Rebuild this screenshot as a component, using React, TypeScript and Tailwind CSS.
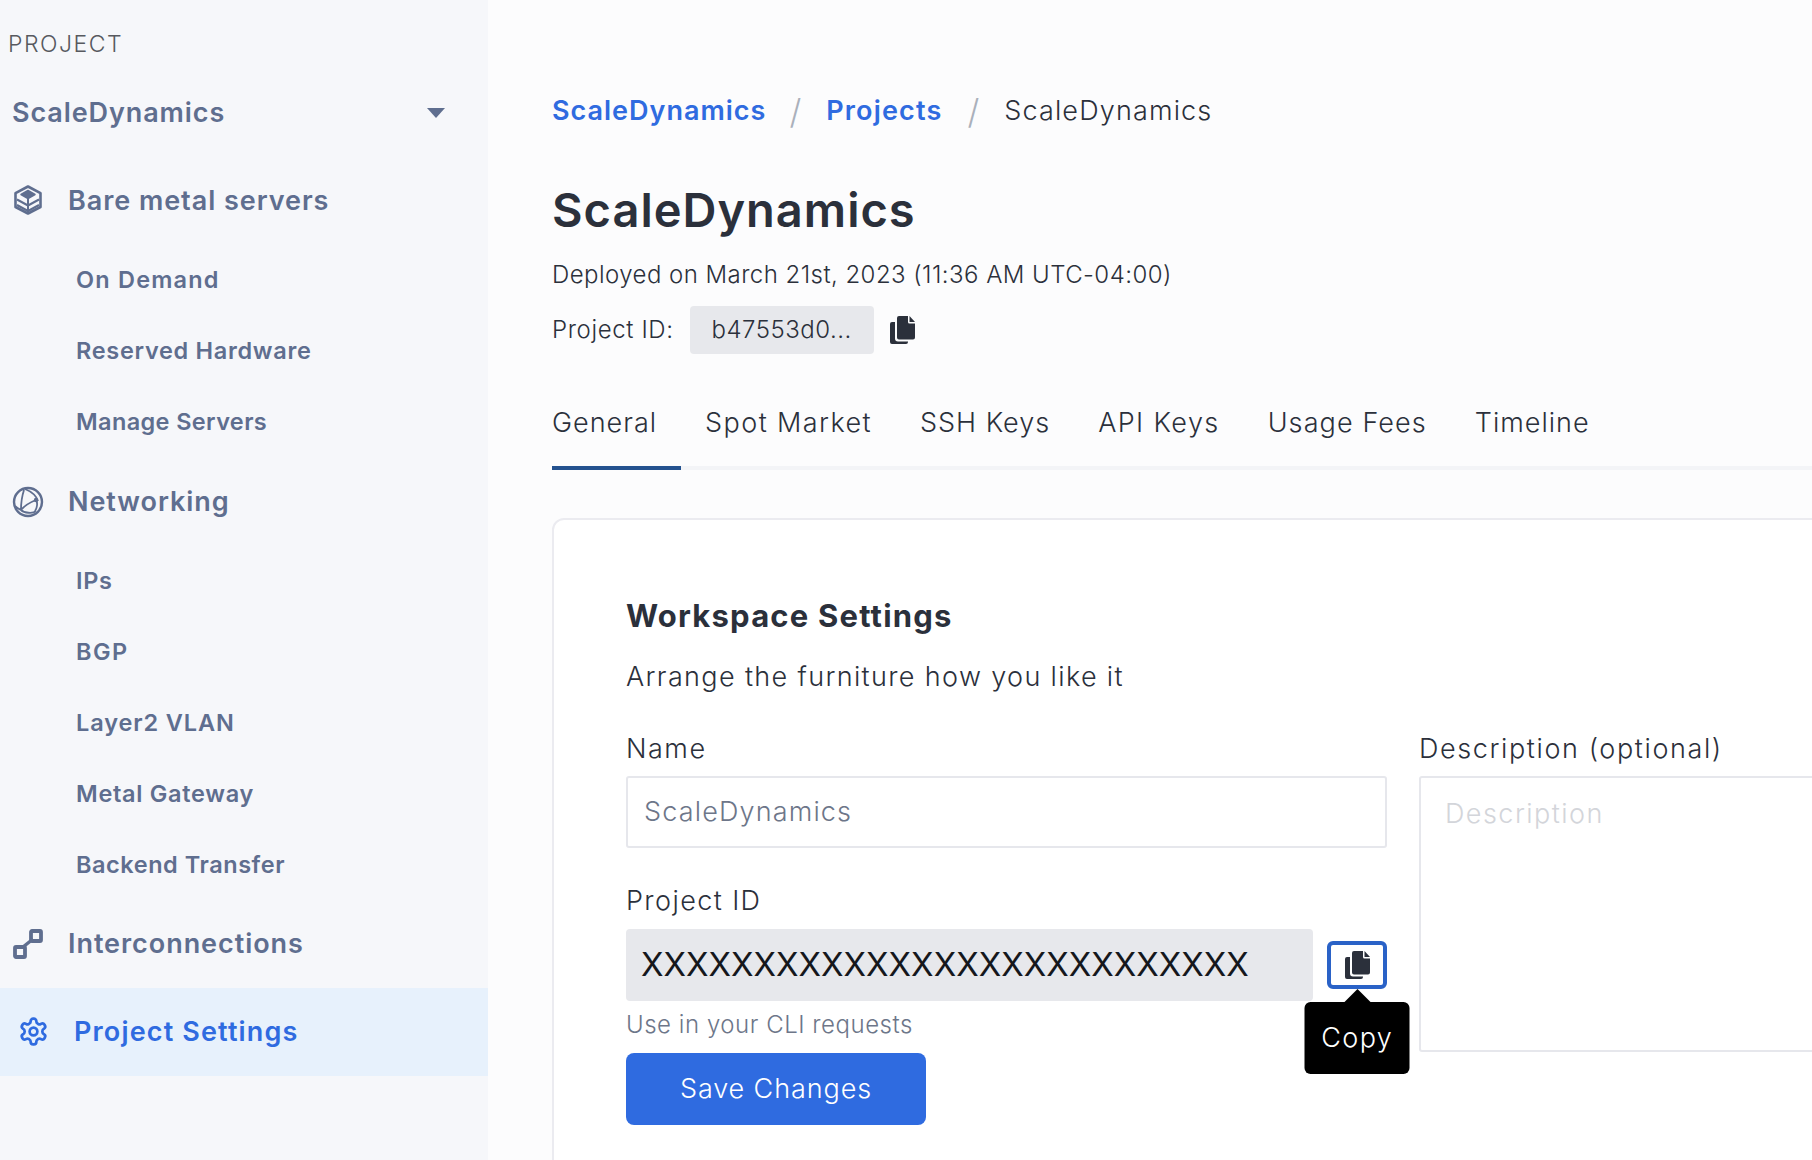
import React from "react";

const F = { fontFamily: "Inter, 'Noto Sans', sans-serif" };

function CopyIcon({ className }: { className: string }) {
  return (
    <svg viewBox="0 0 25 28" className={className} fill="#2b303b">
      <path d="M9 0h9v6a1.500 1.500 0 0 0 1.500 1.500H25v14a2 2 0 0 1-2 2H9a2 2 0 0 1-2-2V2a2 2 0 0 1 2-2z" />
      <path d="M19.500 0 25 6h-5.500z" />
      <path d="M5 6H2a2 2 0 0 0-2 2v18a2 2 0 0 0 2 2h14a2 2 0 0 0 2-2v-.500H8a3 3 0 0 1-3-3z" />
    </svg>
  );
}

function CubeIcon() {
  return (
    <svg viewBox="0 0 28 30" className="w-[28px] h-[30px]" fill="none" stroke="#5f6e8f" strokeWidth="2.600" strokeLinejoin="round">
      <path d="M14 1.500 26.500 8.200V22L14 28.500 1.500 22V8.200z" />
      <path d="M14 5.500 21 9.500 14 13.500 7 9.500z" fill="#5f6e8f" strokeWidth="1.500" />
      <path d="M3 14.500l11 6 11-6M3 20l11 6 11-6M14 14v14" strokeWidth="2" />
    </svg>
  );
}

function GlobeIcon() {
  return (
    <svg viewBox="0 0 32 32" className="w-[32px] h-[32px]" fill="none" stroke="#5f6e8f" strokeWidth="2">
      <circle cx="16" cy="16" r="14" strokeWidth="2.400" />
      <path d="M13 3c5 2 11 6 13 12M24 14c-5 2-11 5-15 10M12 4c-2 6-3 14-3 20 3 3 12 4 15 1M24 14c2 3 1 8-1 11M3 20c2 2 4 3 6 4" strokeWidth="1.800" />
      <circle cx="24" cy="14" r="2.200" fill="#5f6e8f" stroke="none" />
    </svg>
  );
}

function LinkIcon() {
  return (
    <svg viewBox="0 0 30 30" className="w-[30px] h-[30px]" fill="none" stroke="#5f6e8f" strokeWidth="3.800" strokeLinejoin="round">
      <rect x="2" y="18" width="10" height="10" rx="1" />
      <rect x="18" y="2" width="10" height="10" rx="1" />
      <path d="M10 18 20 10" strokeWidth="3.400" />
    </svg>
  );
}

function GearIcon() {
  return (
    <svg viewBox="0 0 24 24" className="w-[31px] h-[31px]" fill="none" stroke="#2f6be0" strokeWidth="2.100" strokeLinecap="round" strokeLinejoin="round">
      <path d="M12.220 2h-.440a2 2 0 0 0-2 2v.180a2 2 0 0 1-1 1.730l-.430.250a2 2 0 0 1-2 0l-.150-.080a2 2 0 0 0-2.730.730l-.220.380a2 2 0 0 0 .730 2.730l.150.100a2 2 0 0 1 1 1.720v.510a2 2 0 0 1-1 1.740l-.150.090a2 2 0 0 0-.730 2.730l.220.380a2 2 0 0 0 2.730.730l.150-.080a2 2 0 0 1 2 0l.430.250a2 2 0 0 1 1 1.730V20a2 2 0 0 0 2 2h.440a2 2 0 0 0 2-2v-.180a2 2 0 0 1 1-1.730l.430-.250a2 2 0 0 1 2 0l.150.080a2 2 0 0 0 2.730-.730l.220-.390a2 2 0 0 0-.730-2.730l-.150-.080a2 2 0 0 1-1-1.740v-.500a2 2 0 0 1 1-1.740l.150-.090a2 2 0 0 0 .730-2.730l-.220-.380a2 2 0 0 0-2.730-.730l-.150.080a2 2 0 0 1-2 0l-.430-.250a2 2 0 0 1-1-1.730V4a2 2 0 0 0-2-2z" />
      <circle cx="12" cy="12" r="3" />
    </svg>
  );
}

function Section({ icon, label }: { icon: React.ReactNode; label: string }) {
  return (
    <div className="flex items-center h-[40px] pl-[12px]">
      <div className="w-[32px] flex justify-center">{icon}</div>
      <span className="ml-[24px] pt-[2px] text-[27px] font-semibold text-[#5f6e8f] tracking-[0.950px]">{label}</span>
    </div>
  );
}

function Sub({ label, track }: { label: string; track: string }) {
  return (
    <div className={"h-[71.200px] flex items-center pl-[76px] text-[23.500px] font-semibold text-[#5f6e8f] " + track}>{label}</div>
  );
}

export default function App() {
  const tabs = [
    { t: "General", c: "tracking-[1px]" },
    { t: "Spot Market", c: "tracking-[1.400px]" },
    { t: "SSH Keys", c: "tracking-[1px]" },
    { t: "API Keys", c: "tracking-[1.400px]" },
    { t: "Usage Fees", c: "tracking-[1.100px]" },
    { t: "Timeline", c: "tracking-[1px]" },
  ];
  return (
    <div style={F} className="flex w-[1812px] h-[1160px] overflow-hidden bg-[#fcfcfd]">
      <aside className="w-[488px] shrink-0 bg-[#f6f7fa]">
        <div className="pt-[28px] pl-[8px] text-[23px] leading-[32px] font-light text-[#57595f] tracking-[1.500px]">PROJECT</div>
        <div className="mt-[33px] flex items-center justify-between h-[40px] pl-[12px] pr-[43px]">
          <span className="text-[27px] font-semibold text-[#5f6e8f] tracking-[0.900px]">ScaleDynamics</span>
          <span className="w-0 h-0 border-l-[9px] border-r-[9px] border-t-[10px] border-l-transparent border-r-transparent border-t-[#5f6e8f]" />
        </div>
        <div className="mt-[47px]"><Section icon={<CubeIcon />} label="Bare metal servers" /></div>
        <div className="mt-[24px]">
          <Sub label="On Demand" track="tracking-[1.200px]" />
          <Sub label="Reserved Hardware" track="tracking-[0.700px]" />
          <Sub label="Manage Servers" track="tracking-[0.370px]" />
        </div>
        <div className="mt-[24px]"><Section icon={<GlobeIcon />} label="Networking" /></div>
        <div className="mt-[23px]">
          <Sub label="IPs" track="tracking-[0.700px]" />
          <Sub label="BGP" track="tracking-[1.400px]" />
          <Sub label="Layer2 VLAN" track="tracking-[0.900px]" />
          <Sub label="Metal Gateway" track="tracking-[0.700px]" />
          <Sub label="Backend Transfer" track="tracking-[0.550px]" />
        </div>
        <div className="mt-[23px]"><Section icon={<LinkIcon />} label="Interconnections" /></div>
        <div className="mt-[24px] h-[88px] bg-[#e7f1fc] flex items-center pl-[18px]">
          <GearIcon />
          <span className="ml-[25px] pt-[2px] text-[27px] font-semibold text-[#2f6be0] tracking-[1.150px]">Project Settings</span>
        </div>
      </aside>

      <main className="flex-1 min-w-0 pl-[64px] pt-[91px]">
        <div className="flex items-center h-[40px] text-[27px] tracking-[1px]">
          <span className="font-semibold text-[#2f6be0]">ScaleDynamics</span>
          <span className="ml-[23px] font-light text-[#aab0bb] text-[34px]">/</span>
          <span className="ml-[24px] font-semibold text-[#2f6be0] tracking-[1.150px]">Projects</span>
          <span className="ml-[25px] font-light text-[#aab0bb] text-[34px]">/</span>
          <span className="ml-[24px] font-light text-[#2b303b] tracking-[1.150px]">ScaleDynamics</span>
        </div>
        <h1 className="mt-[50px] text-[47px] leading-[58px] font-semibold text-[#2b303b] tracking-[1px]">ScaleDynamics</h1>
        <p className="mt-[20px] text-[24px] leading-[32px] font-light text-[#2b303b] tracking-[0.450px]">Deployed on March 21st, 2023 (11:36 AM UTC-04:00)</p>
        <div className="mt-[15px] flex items-center h-[48px]">
          <span className="text-[24px] font-light text-[#2b303b] tracking-[0.630px]">Project ID:</span>
          <span className="ml-[16px] w-[184px] h-[48px] rounded-[4px] bg-[#e7e8ec] flex items-center justify-center text-[24px] font-light text-[#2b303b] tracking-[0.500px]">b47553d0...</span>
          <CopyIcon className="ml-[16px] w-[25px] h-[28px]" />
        </div>
        <div className="mt-[49px] w-[1400px] h-[67px] border-b-[4px] border-[#f3f4f7] flex">
          {tabs.map((tab, i) => (
            <div
              key={tab.t}
              className={
                (i === 0
                  ? "h-[67px] pr-[24px] border-b-[4px] border-[#24528f] text-[27px] font-light text-[#2b303b] leading-[40px] "
                  : "h-[67px] pl-[24px] pr-[24px] text-[27px] font-light text-[#2b303b] leading-[40px] ") + tab.c
              }
            >
              {tab.t}
            </div>
          ))}
        </div>
        <section className="mt-[48px] w-[1400px] h-[700px] rounded-t-[12px] border-2 border-[#ebebf0] bg-white pl-[72px] pt-[74px]">
          <h2 className="text-[31px] leading-[44px] font-bold text-[#2b303b] tracking-[1.200px]">Workspace Settings</h2>
          <p className="mt-[17px] text-[27px] leading-[44px] font-light text-[#2b303b] tracking-[1.350px]">Arrange the furniture how you like it</p>
          <div className="mt-[32px] flex">
            <div className="w-[761px] shrink-0">
              <label className="block text-[27px] leading-[36px] font-light text-[#2b303b] tracking-[1.500px]">Name</label>
              <div className="mt-[9px] h-[72px] border-2 border-[#e6e7ec] rounded-[3px] flex items-center pl-[16px] text-[27px] font-light text-[#6d7689] tracking-[1.150px]">ScaleDynamics</div>
              <label className="mt-[35px] block text-[27px] leading-[36px] font-light text-[#2b303b] tracking-[1.400px]">Project ID</label>
              <div className="mt-[10px] flex items-center">
                <div className="w-[693px] h-[72px] rounded-[4px] bg-[#e7e8ec] flex items-center pl-[15px] text-[33px] font-normal text-[#15171c] whitespace-nowrap overflow-hidden">XXXXXXXXXXXXXXXXXXXXXXXXXXX</div>
                <div className="relative ml-[14px] w-[60px] h-[48px] rounded-[6px] border-[4px] border-[#2a62c7] bg-white flex items-center justify-center">
                  <CopyIcon className="w-[25px] h-[28px]" />
                  <div className="absolute left-1/2 -translate-x-1/2 top-[57px] w-[105px] h-[72px] rounded-[6px] bg-black text-white flex items-center justify-center text-[27px] font-light tracking-[1.400px]">
                    Copy
                    <span className="absolute left-1/2 -translate-x-1/2 -top-[13px] w-0 h-0 border-l-[13px] border-r-[13px] border-b-[13px] border-l-transparent border-r-transparent border-b-black" />
                  </div>
                </div>
              </div>
              <p className="mt-[6px] text-[24px] leading-[36px] font-light text-[#6d7689] tracking-[0.530px]">Use in your CLI requests</p>
              <button className="mt-[10px] w-[300px] h-[72px] rounded-[8px] bg-[#2f6be0] text-white text-[27px] font-light tracking-[0.900px]">Save Changes</button>
            </div>
            <div className="ml-[32px] flex-1">
              <label className="block text-[27px] leading-[36px] font-light text-[#2b303b] tracking-[1.600px]">Description (optional)</label>
              <div className="mt-[9px] h-[276px] border-2 border-[#e6e7ec] rounded-[3px] pl-[24px] pt-[18px] text-[27px] leading-[36px] font-light text-[#d3d5da] tracking-[1.450px]">Description</div>
            </div>
          </div>
        </section>
      </main>
    </div>
  );
}
